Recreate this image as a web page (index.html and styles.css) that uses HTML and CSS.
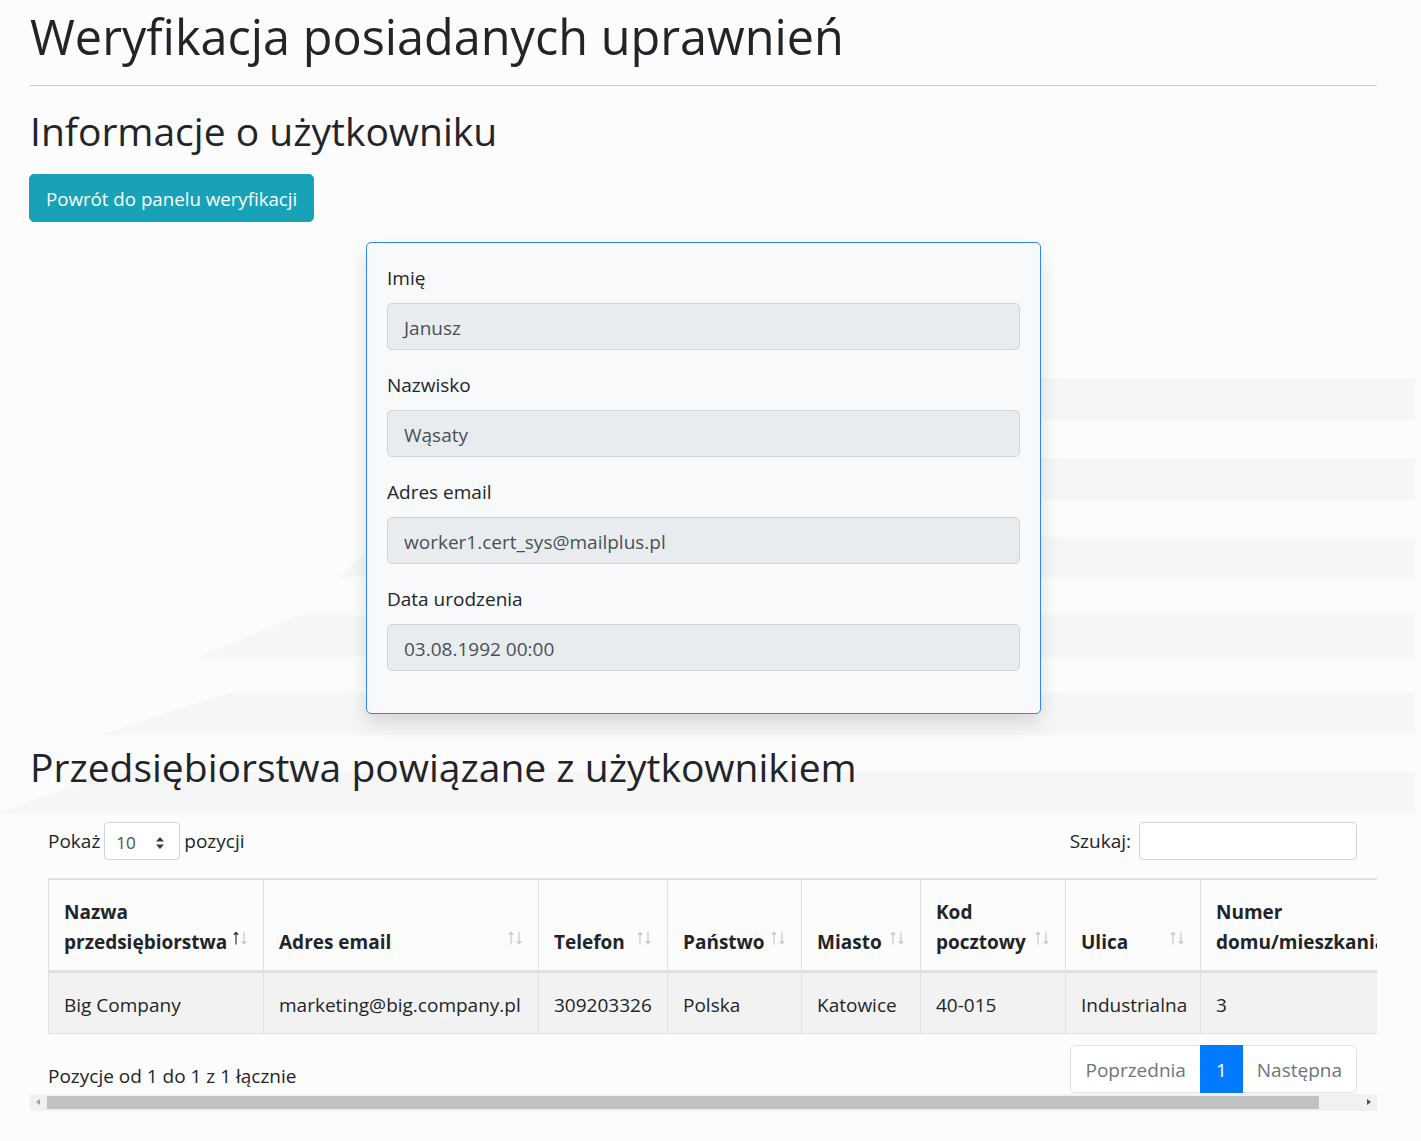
FILE: index.html
```html
<!DOCTYPE html>
<html lang="pl">
<head>
<meta charset="utf-8">
<title>Weryfikacja posiadanych uprawnień</title>
<link rel="stylesheet" href="styles.css">
</head>
<body>
<div class="container">
  <h1 class="title">Weryfikacja posiadanych uprawnień</h1>
  <hr class="rule">
  <h2 class="section first">Informacje o użytkowniku</h2>
  <a class="btn-info" href="#">Powrót do panelu weryfikacji</a>

  <div class="card-row">
    <div class="card">
      <div class="form-group">
        <label class="lbl">Imię</label>
        <div class="field">Janusz</div>
      </div>
      <div class="form-group">
        <label class="lbl">Nazwisko</label>
        <div class="field">Wąsaty</div>
      </div>
      <div class="form-group">
        <label class="lbl">Adres email</label>
        <div class="field">worker1.cert_sys@mailplus.pl</div>
      </div>
      <div class="form-group">
        <label class="lbl">Data urodzenia</label>
        <div class="field">03.08.1992 00:00</div>
      </div>
    </div>
  </div>

  <h2 class="section second">Przedsiębiorstwa powiązane z użytkownikiem</h2>

  <div class="dt">
    <div class="dt-top">
      <div class="dt-length">
        <span>Pokaż</span>
        <span class="select">10
          <svg class="sel-arrows" width="10" height="14" viewBox="0 0 10 14"><path d="M5 1 L9 5.5 H1 Z M5 13 L9 8.5 H1 Z" fill="#343a40"/></svg>
        </span>
        <span>pozycji</span>
      </div>
      <div class="dt-search">
        <span>Szukaj:</span>
        <span class="search-box"></span>
      </div>
    </div>

    <table class="tbl">
      <colgroup>
        <col class="c1"><col class="c2"><col class="c3"><col class="c4"><col class="c5"><col class="c6"><col class="c7"><col class="c8">
      </colgroup>
      <thead>
        <tr>
          <th class="sort asc">Nazwa<br>przedsiębiorstwa</th>
          <th class="sort">Adres email</th>
          <th class="sort">Telefon</th>
          <th class="sort">Państwo</th>
          <th class="sort">Miasto</th>
          <th class="sort">Kod<br>pocztowy</th>
          <th class="sort">Ulica</th>
          <th class="sort">Numer<br>domu/mieszkania</th>
        </tr>
      </thead>
      <tbody>
        <tr>
          <td>Big Company</td>
          <td>marketing@big.company.pl</td>
          <td>309203326</td>
          <td>Polska</td>
          <td>Katowice</td>
          <td>40-015</td>
          <td>Industrialna</td>
          <td>3</td>
        </tr>
      </tbody>
    </table>

    <div class="dt-bottom">
      <div class="dt-info">Pozycje od 1 do 1 z 1 łącznie</div>
      <ul class="pagination">
        <li class="page disabled">Poprzednia</li>
        <li class="page active">1</li>
        <li class="page disabled">Następna</li>
      </ul>
    </div>
  </div>

  <div class="scrollbar">
    <span class="sb-arrow left"></span>
    <span class="sb-thumb"></span>
    <span class="sb-arrow right"></span>
  </div>
</div>
</body>
</html>
```

FILE: styles.css
```css
html {
  font-size: 20px;
}

body {
  margin: 0;
  font-family: "Open Sans", "Noto Sans", sans-serif;
  font-size: 19px;
  line-height: 1.5;
  color: #212529;
  background-color: #fcfcfc;
  background-image: url("data:image/svg+xml,%3Csvg xmlns='http://www.w3.org/2000/svg' width='1421' height='1141'%3E%3Cg fill='%23f6f6f6'%3E%3Cpolygon points='560,378 1415,378 1415,420 520,420'/%3E%3Cpolygon points='470,458 1415,458 1415,500 430,500'/%3E%3Cpolygon points='380,537 1415,537 1415,577 340,577'/%3E%3Cpolygon points='300,615 1415,615 1415,657 200,657'/%3E%3Cpolygon points='230,693 1415,693 1415,735 100,735'/%3E%3Cpolygon points='110,772 1415,772 1415,813 0,813'/%3E%3C/g%3E%3C/svg%3E");
  background-repeat: no-repeat;
}

.container {
  width: 1347px;
  margin-left: 30px;
  padding-top: 1px;
}

.title {
  font-size: 48.6px;
  font-weight: 500;
  line-height: 60px;
  margin: 5px 0 0;
}

.rule {
  border: 0;
  border-top: 1px solid #c5cae9;
  margin: 19px 0 0;
  height: 0;
}

.section {
  font-size: 39px;
  font-weight: 500;
  line-height: 48px;
  margin: 0;
}

.section.first {
  margin-top: 21px;
}

.btn-info {
  display: inline-block;
  margin-top: 19px;
  margin-left: -1px;
  background: #17a2b8;
  border: 1px solid #17a2b8;
  border-radius: 5px;
  color: #fff;
  text-decoration: none;
  font-size: 18.7px;
  line-height: 30px;
  padding: 9px 16px 7px;
}

.card-row {
  display: flex;
  justify-content: center;
  margin-top: 20px;
}

.card {
  box-sizing: border-box;
  width: 675px;
  background: #f8f9fa;
  border: 1px solid #2f86f2;
  border-radius: 5px;
  box-shadow: 0 10px 20px rgba(0, 0, 0, 0.12);
  padding: 20px 20px 22px;
}

.form-group {
  margin-bottom: 20px;
}

.lbl {
  display: block;
  line-height: 30px;
  margin-bottom: 10px;
  color: #212529;
}

.field {
  height: 45px;
  border: 1px solid #ced4da;
  border-radius: 5px;
  background: #e9ecef;
  color: #495057;
  line-height: 49px;
  padding: 0 16px;
}

.section.second {
  margin-top: 29px;
}

.dt {
  overflow: hidden;
  padding: 0 20px 0 18px;
}

.dt-top {
  display: flex;
  justify-content: space-between;
  align-items: center;
  margin-top: 31px;
  height: 38px;
}

.dt-length {
  display: flex;
  align-items: center;
  gap: 4px;
}

.select {
  display: inline-flex;
  align-items: center;
  justify-content: space-between;
  box-sizing: border-box;
  width: 76px;
  height: 38px;
  padding: 3px 14px 0 11px;
  background: #fff;
  border: 1px solid #ced4da;
  border-radius: 4px;
  font-size: 17px;
  color: #495057;
}

.dt-search {
  display: flex;
  align-items: center;
  gap: 8px;
}

.search-box {
  display: block;
  box-sizing: border-box;
  width: 218px;
  height: 38px;
  background: #fff;
  border: 1px solid #ced4da;
  border-radius: 4px;
}

.tbl {
  margin-top: 18px;
  border-collapse: collapse;
  table-layout: fixed;
  width: 1412px;
  border-top: 2px solid #dee2e6;
}

.c1 { width: 215px; }
.c2 { width: 275px; }
.c3 { width: 129px; }
.c4 { width: 134px; }
.c5 { width: 119px; }
.c6 { width: 145px; }
.c7 { width: 135px; }
.c8 { width: 260px; }

.tbl th,
.tbl td {
  border: 1px solid #dee2e6;
  padding: 17px 30px 13px 15px;
  text-align: left;
  white-space: nowrap;
  line-height: 30px;
}

.tbl th {
  font-weight: 700;
  vertical-align: bottom;
  border-bottom: 3px solid #dee2e6;
  position: relative;
}

.tbl td {
  background: #f2f2f2;
}

.sort::after {
  content: "";
  position: absolute;
  right: 16px;
  bottom: 25px;
  width: 14px;
  height: 14px;
  background-image: url("data:image/svg+xml,%3Csvg xmlns='http://www.w3.org/2000/svg' width='14' height='14' viewBox='0 0 14 14' fill='none' stroke-width='1.1'%3E%3Cpath d='M3 13.5V1.5M0.8 3.8L3 1.3L5.2 3.8' stroke='%23c2c3c4'/%3E%3Cpath d='M11 0.5V12.5M8.8 10.2L11 12.7L13.2 10.2' stroke='%23c2c3c4'/%3E%3C/svg%3E");
}

.sort.asc::after {
  background-image: url("data:image/svg+xml,%3Csvg xmlns='http://www.w3.org/2000/svg' width='14' height='14' viewBox='0 0 14 14' fill='none' stroke-width='1.1'%3E%3Cpath d='M3 13.5V1.5M0.8 3.8L3 1.3L5.2 3.8' stroke='%23212529'/%3E%3Cpath d='M11 0.5V12.5M8.8 10.2L11 12.7L13.2 10.2' stroke='%23c2c3c4'/%3E%3C/svg%3E");
}

.dt-bottom {
  display: flex;
  justify-content: space-between;
  align-items: flex-start;
  margin-top: 10px;
}

.dt-info {
  padding-top: 18px;
}

.pagination {
  display: flex;
  list-style: none;
  margin: 1px 0 0;
  padding: 0;
}

.page {
  border: 1px solid #dee2e6;
  background: #fff;
  line-height: 25px;
  padding: 12px 14px 9px;
  color: #6c757d;
}

.page + .page {
  margin-left: -1px;
}

.page:first-child {
  border-radius: 5px 0 0 5px;
}

.page:last-child {
  border-radius: 0 5px 5px 0;
}

.page.active {
  background: #007bff;
  border-color: #007bff;
  color: #fff;
  position: relative;
  padding-left: 15px;
  padding-right: 15px;
}

.scrollbar {
  display: flex;
  align-items: center;
  height: 17px;
  margin-top: 1px;
  background: #f1f1f1;
}

.sb-arrow {
  width: 17px;
  height: 17px;
  position: relative;
}

.sb-arrow.left::after,
.sb-arrow.right::after {
  content: "";
  position: absolute;
  top: 5px;
  border-top: 3.5px solid transparent;
  border-bottom: 3.5px solid transparent;
}

.sb-arrow.left::after {
  left: 6px;
  border-right: 4px solid #a3a3a3;
}

.sb-arrow.right::after {
  left: 7px;
  border-left: 4px solid #505050;
}

.sb-thumb {
  height: 13px;
  width: 1272px;
  background: #c1c1c1;
  margin-right: auto;
}
```
